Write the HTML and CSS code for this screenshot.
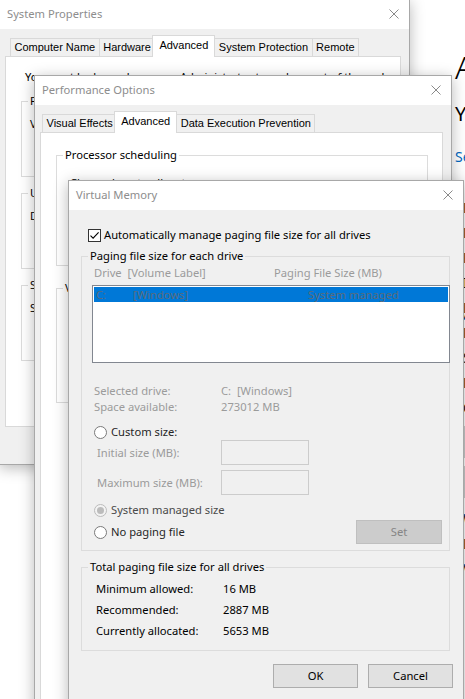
FILE: index.html
```
<!DOCTYPE html>
<html lang="en">
<head>
<meta charset="utf-8">
<title>Virtual Memory</title>
<link rel="stylesheet" href="styles.css">
</head>
<body>
<div class="desktop">

  <section class="settings">
    <h1 class="s-title">About</h1>
    <p class="s-sub">Your PC is monitored and protected.</p>
    <p class="s-link">See details in Windows Security</p>
    <div class="s-text">
      <p>Device specifications</p>
      <p>Device name</p>
      <p>Processor</p>
      <p>Installed RAM</p>
      <p>Device ID</p>
      <p>Product ID</p>
      <p>System type</p>
      <p>Pen and touch</p>
      <p>Copy</p>
      <div class="s-btn"></div>
      <div class="s-btn"></div>
      <p>Windows specifications</p>
      <p>Edition</p>
      <p>Version</p>
    </div>
  </section>

  <section class="win sysprop">
    <header class="titlebar">
      <span class="title">System Properties</span>
      <svg class="x" viewBox="0 0 10 10"><path d="M0.5 0.5L9.5 9.5M9.5 0.5L0.5 9.5"/></svg>
    </header>
    <div class="win-body">
      <nav class="tabs">
        <span class="tab">Computer Name</span>
        <span class="tab">Hardware</span>
        <span class="tab active">Advanced</span>
        <span class="tab">System Protection</span>
        <span class="tab">Remote</span>
      </nav>
      <div class="panel sp-panel">
        <p class="sp-note">You must be logged on as an Administrator to make most of these changes.</p>
        <fieldset class="grp sp-grp"><legend>Performance</legend><p class="sp-text">Visual effects, processor scheduling, memory usage, and virtual memory</p></fieldset>
        <fieldset class="grp sp-grp"><legend>User Profiles</legend><p class="sp-text">Desktop settings related to your sign-in</p></fieldset>
        <fieldset class="grp sp-grp"><legend>Startup and Recovery</legend><p class="sp-text">System startup, system failure, and debugging information</p></fieldset>
      </div>
    </div>
  </section>

  <section class="win perf">
    <header class="titlebar">
      <span class="title">Performance Options</span>
      <svg class="x" viewBox="0 0 10 10"><path d="M0.5 0.5L9.5 9.5M9.5 0.5L0.5 9.5"/></svg>
    </header>
    <div class="win-body">
      <nav class="tabs po-tabs">
        <span class="tab">Visual Effects</span>
        <span class="tab active">Advanced</span>
        <span class="tab">Data Execution Prevention</span>
      </nav>
      <div class="panel po-panel">
        <fieldset class="grp po-grp1"><legend>Processor scheduling</legend><p class="po-text">Choose how to allocate processor resources.</p></fieldset>
        <fieldset class="grp po-grp2"><legend>Virtual memory</legend><p class="po-text">A paging file is an area on the hard disk that Windows uses as if it were RAM.</p></fieldset>
      </div>
    </div>
  </section>

  <section class="win vm">
    <header class="titlebar">
      <span class="title">Virtual Memory</span>
      <svg class="x" viewBox="0 0 10 10"><path d="M0.5 0.5L9.5 9.5M9.5 0.5L0.5 9.5"/></svg>
    </header>
    <div class="win-body vm-body">
      <label class="check-row">
        <svg class="checkbox" viewBox="0 0 13 13"><rect x="0.5" y="0.5" width="12" height="12" fill="#fff" stroke="#333"/><path d="M2.5 6.6L5.1 9.2L10.6 3.4" fill="none" stroke="#000" stroke-width="1.1"/></svg>
        <span>Automatically manage paging file size for all drives</span>
      </label>

      <fieldset class="grp vm-grp1">
        <legend>Paging file size for each drive</legend>
        <div class="hdr dis"><span>Drive&nbsp; [Volume Label]</span><span>Paging File Size (MB)</span></div>
        <div class="listbox">
          <div class="lrow"><span>C:</span><span>[Windows]</span><span>System managed</span></div>
        </div>
        <div class="info dis">
          <span>Selected drive:</span><span>C:&nbsp; [Windows]</span>
          <span>Space available:</span><span>273012 MB</span>
        </div>
        <div class="opt opt-custom"><span class="radio"></span><span>Custom size:</span></div>
        <div class="size-row"><span class="dis">Initial size (MB):</span><span class="input"></span></div>
        <div class="size-row size-row2"><span class="dis">Maximum size (MB):</span><span class="input"></span></div>
        <div class="opt opt-sys"><span class="radio on"></span><span>System managed size</span></div>
        <div class="opt opt-none"><span class="radio"></span><span>No paging file</span><span class="btn set">Set</span></div>
      </fieldset>

      <fieldset class="grp vm-grp2">
        <legend>Total paging file size for all drives</legend>
        <div class="totals">
          <span>Minimum allowed:</span><span>16 MB</span>
          <span>Recommended:</span><span>2887 MB</span>
          <span>Currently allocated:</span><span>5653 MB</span>
        </div>
      </fieldset>

      <div class="actions">
        <span class="btn">OK</span>
        <span class="btn">Cancel</span>
      </div>
    </div>
  </section>

</div>
</body>
</html>
```
FILE: styles.css
```
* { box-sizing: border-box; }
body { margin: 0; }
p { margin: 0; }

.desktop {
  position: relative;
  width: 465px;
  height: 699px;
  overflow: hidden;
  background: #fff;
  font-family: "Noto Sans", "Open Sans", sans-serif;
  font-size: 11.2px;
  line-height: 16px;
  color: #000;
}

/* background Settings window (only its left edge shows) */
.settings {
  position: absolute;
  left: 455px;
  top: 0;
  width: 320px;
  height: 699px;
  white-space: nowrap;
}
.s-title { margin: 47px 0 0; font-size: 32px; line-height: 40px; font-weight: 300; }
.s-sub { margin-top: 13px; font-size: 20px; line-height: 28px; }
.s-link { margin-top: 19px; font-size: 14px; line-height: 20px; color: #0067c0; }
.s-text { margin-top: 28px; font-size: 14px; line-height: 25px; margin-left: 8px; color: #111; }
.s-btn { width: 120px; height: 32px; background: #cccccc; margin: 6px 0 8px; }

/* windows */
.win {
  position: absolute;
  background: #f0f0f0;
  border: 1px solid #a8a8a8;
  box-shadow: 0 3px 14px rgba(0, 0, 0, 0.28);
}
.titlebar {
  height: 29px;
  background: #fff;
  display: flex;
  align-items: center;
  justify-content: space-between;
  padding: 0 10px 1px 7px;
  color: #8d8d8d;
}
.x { width: 10px; height: 10px; fill: none; stroke: #8a8a8a; stroke-width: 1; }

.sysprop { left: -1px; top: -1px; width: 411px; height: 466px; }
.perf { left: 34px; top: 75px; width: 418px; height: 700px; }
.vm { left: 68px; top: 180px; width: 396px; height: 540px; }

/* tabs */
.win-body { padding: 6px 0 0 5px; }
.tabs {
  display: flex;
  align-items: flex-end;
  height: 21px;
  padding-left: 5px;
  position: relative;
  z-index: 1;
  font-family: "Liberation Sans", Arial, sans-serif;
  font-size: 11px;
}
.po-tabs { padding-left: 2px; }
.tab {
  height: 18px;
  line-height: 17px;
  padding: 0 3.5px;
  border: 1px solid #d9d9d9;
  border-bottom: none;
  margin-right: -1px;
  background: #f0f0f0;
  white-space: nowrap;
}
.tab.active {
  height: 22px;
  line-height: 19px;
  margin: 0 -1px -1px -2px;
  padding: 0 6px;
  background: #fff;
  position: relative;
  z-index: 2;
}

.panel {
  background: #fff;
  border: 1px solid #d9d9d9;
}
.sp-panel { width: 396px; height: 371px; padding: 12px 0 0 0; }
.sp-note { padding-left: 19px; white-space: nowrap; }
.po-panel { width: 403px; height: 600px; padding-top: 14px; }

/* group boxes */
.grp {
  margin: 0;
  padding: 0;
  border: 1px solid #dcdcdc;
  min-width: 0;
}
.grp legend {
  margin-left: 6px;
  padding: 0 2px;
  line-height: 16px;
  white-space: nowrap;
}
.sp-grp { margin: 8px 0 0 15px; width: 370px; height: 84px; }
.sp-text { padding: 7px 0 0 8px; white-space: nowrap; }
.po-grp1 { margin-left: 15px; width: 372px; height: 119px; }
.po-grp2 { margin: 14px 0 0 15px; width: 372px; height: 123px; }
.po-text { padding: 12px 0 0 13px; white-space: nowrap; }

/* virtual memory dialog */
.vm-body { padding: 17px 10px 0 12px; }
.check-row {
  display: flex;
  align-items: center;
  gap: 3px;
  height: 16px;
  margin-left: 7px;
}
.checkbox { width: 13px; height: 13px; flex: none; }

.dis { color: #9b9b9b; }

.vm-grp1 { margin-top: 5px; width: 369px; padding-bottom: 6px; }
.hdr {
  display: grid;
  grid-template-columns: 180px auto;
  padding-left: 12px;
  margin-top: 1px;
}
.listbox {
  margin: 4px 0 0 10px;
  width: 358px;
  height: 78px;
  border: 1px solid #828790;
  background: #fff;
  padding: 1px;
}
.lrow {
  display: grid;
  grid-template-columns: 37px 175px auto;
  height: 15px;
  line-height: 15px;
  padding-left: 2px;
  background: #0078d7;
  color: #5b6b7a;
}
.info {
  display: grid;
  grid-template-columns: 127px auto;
  margin-top: 20px;
  padding-left: 12px;
}
.opt {
  display: flex;
  align-items: center;
  gap: 4px;
  padding-left: 12px;
  height: 16px;
  color: #262626;
}
.opt-custom { margin-top: 9px; }
.opt-sys { margin-top: 7px; color: #4a4a4a; }
.opt-none { margin-top: 2px; height: 24px; }
.radio {
  width: 13px;
  height: 13px;
  flex: none;
  border: 1px solid #7a7a7a;
  border-radius: 50%;
  background: #fff;
  display: flex;
  align-items: center;
  justify-content: center;
}
.radio.on { border-color: #bcbcbc; background: #f3f3f3; }
.radio.on::after {
  content: "";
  width: 7px;
  height: 7px;
  border-radius: 50%;
  background: #bcbcbc;
}
.size-row {
  display: grid;
  grid-template-columns: 124px 88px;
  align-items: center;
  padding-left: 15px;
  height: 25px;
}
.size-row2 { margin-top: 5px; }
.input {
  height: 25px;
  border: 1px solid #cccccc;
  background: #f0f0f0;
}
.btn {
  width: 85px;
  height: 24px;
  border: 1px solid #adadad;
  background: #e1e1e1;
  display: flex;
  align-items: center;
  justify-content: center;
  color: #000;
}
.btn.set {
  margin-left: auto;
  margin-right: 7px;
  width: 86px;
  background: #cccccc;
  border-color: #bfbfbf;
  color: #858585;
}

.vm-grp2 { margin-top: 8px; width: 369px; padding-bottom: 9px; }
.totals {
  display: grid;
  grid-template-columns: 127px auto;
  grid-auto-rows: 21px;
  align-items: center;
  margin-top: 3px;
  padding-left: 14px;
}
.actions {
  display: flex;
  justify-content: flex-end;
  gap: 10px;
  margin-top: 13px;
}
```
